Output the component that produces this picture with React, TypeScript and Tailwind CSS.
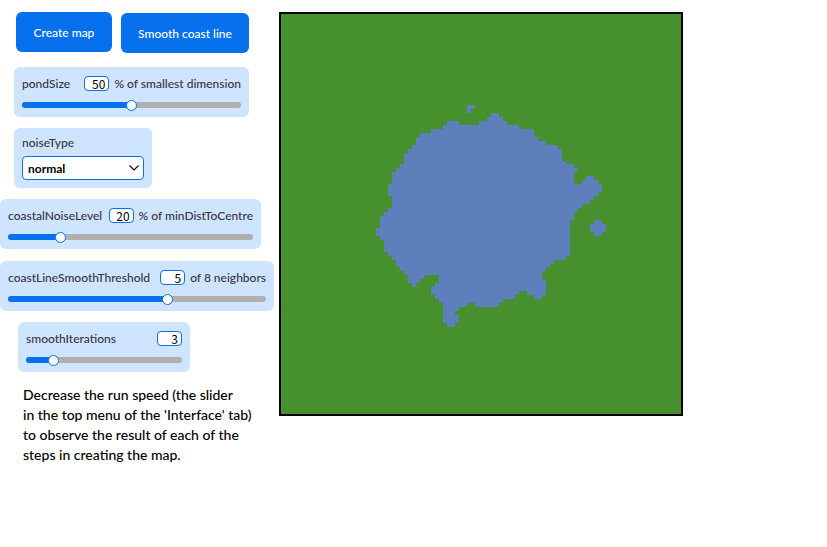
import { useState } from "react";

const POND =
  "M487 117V121H479V125H459V121H447V125H443V129H431V133H420V137H416V145H412V149H408V153H404V164H400V168H396V172H392V184H388V196H392V208H388V212H384V216H380V228H376V236H380V240H384V252H388V256H392V260H396V267H400V271H404V275H408V283H412V287H416V283H420V279H424V275H439V283H435V287H431V295H435V299H439V303H443V323H447V327H455V323H459V315H455V311H459V307H467V303H475V307H499V303H503V299H515V295H519V291H527V295H534V299H542V295H546V279H542V271H546V267H550V264H554V260H566V256H570V220H574V212H578V208H582V204H590V200H594V196H598V192H602V184H598V180H594V176H586V180H582V184H574V172H578V168H574V164H566V161H562V149H558V145H546V141H538V137H534V129H519V125H507V121H503V117H499V113H491V117Z";
const PUDDLE = "M467 105H475V109H471V113H467Z";
const LAKE = "M594 220H602V224H606V232H602V236H594V232H590V224H594Z";

type SliderProps = {
  name: string;
  units?: string;
  initial: number;
  min?: number;
  max: number;
  className: string;
};

function Slider({ name, units, initial, min = 0, max, className }: SliderProps) {
  const [value, setValue] = useState(initial);
  const percent = ((value - min) / (max - min)) * 100;
  return (
    <div className={`h-[50px] rounded-md bg-[#cfe4ff] px-2 pt-2 ${className}`}>
      <div className="flex h-4 items-center whitespace-nowrap text-xs font-medium text-[#353545]">
        <label htmlFor={name} className="pt-0.5 leading-4">
          {name}
        </label>
        <input
          type="text"
          aria-label={`${name} value`}
          value={value}
          onChange={(e) => setValue(Number(e.target.value) || min)}
          className="ml-auto h-[15px] w-[25px] rounded border border-[#0670ed] bg-white pr-[3px] text-right font-['Noto_Sans_CJK_SC',sans-serif] text-xs leading-3 font-normal text-black"
        />
        {units && <span className="ml-[5px] pt-0.5 leading-4">{units}</span>}
      </div>
      <input
        id={name}
        type="range"
        min={min}
        max={max}
        value={value}
        onChange={(e) => setValue(Number(e.target.value))}
        style={{ backgroundImage: `linear-gradient(to right, #0670ed ${percent}%, #b0b0b0 ${percent}%)` }}
        className="mt-[11px] block h-1.5 w-full appearance-none rounded-full [&::-webkit-slider-thumb]:h-[11px] [&::-webkit-slider-thumb]:w-[11px] [&::-webkit-slider-thumb]:appearance-none [&::-webkit-slider-thumb]:rounded-full [&::-webkit-slider-thumb]:border [&::-webkit-slider-thumb]:border-[#0670ed] [&::-webkit-slider-thumb]:bg-white"
      />
    </div>
  );
}

export default function App() {
  const button = "h-10 rounded-md bg-[#0670ed] pt-0.5 text-xs font-medium text-white";
  return (
    <main className="flex items-start gap-[5px] bg-white pt-3 font-['Lato',sans-serif]">
      <section className="flex w-[274px] shrink-0 flex-col items-start">
        <div className="flex items-start gap-[9px] pl-4">
          <button className={`w-24 ${button}`}>Create map</button>
          <button className={`mt-px w-32 ${button}`}>Smooth coast line</button>
        </div>
        <Slider name="pondSize" units="% of smallest dimension" initial={50} max={100} className="ml-3.5 mt-3.5 w-[235px]" />
        <div className="ml-3.5 mt-[11px] h-[60px] w-[138px] rounded-md bg-[#cfe4ff] px-2 pt-[7px]">
          <label htmlFor="noiseType" className="block text-xs font-medium leading-4 text-[#353545]">
            noiseType
          </label>
          <div className="relative mt-[5px]">
            <select
              id="noiseType"
              className="block h-6 w-full appearance-none rounded border border-[#0670ed] bg-white px-[5px] pt-0.5 text-xs font-bold text-black"
            >
              <option>normal</option>
              <option>uniform</option>
            </select>
            <svg className="pointer-events-none absolute right-1 top-1.5 h-3 w-3" viewBox="0 0 12 12" fill="none" stroke="black" strokeWidth="1.1">
              <path d="M1.5 3.5 6 8l4.5-4.5" />
            </svg>
          </div>
        </div>
        <Slider name="coastalNoiseLevel" units="% of minDistToCentre" initial={20} max={100} className="mt-[11px] w-[261px]" />
        <Slider name="coastLineSmoothThreshold" units="of 8 neighbors" initial={5} max={8} className="mt-3 w-full" />
        <Slider name="smoothIterations" initial={3} min={0} max={20} className="ml-[18px] mt-[11px] w-[172px]" />
        <p className="ml-[23px] mt-[13px] whitespace-nowrap text-sm font-medium leading-5 text-black">
          Decrease the run speed (the slider
          <br />
          in the top menu of the 'Interface' tab)
          <br />
          to observe the result of each of the
          <br />
          steps in creating the map.
        </p>
      </section>
      <div className="shrink-0 border-2 border-black bg-[#46902e]">
        <svg role="img" aria-label="Pond map" className="block" width="400" height="400" viewBox="281 14 400 400" shapeRendering="crispEdges" fill="#5d7fbc">
          <path d={POND} />
          <path d={PUDDLE} />
          <path d={LAKE} />
        </svg>
      </div>
    </main>
  );
}
